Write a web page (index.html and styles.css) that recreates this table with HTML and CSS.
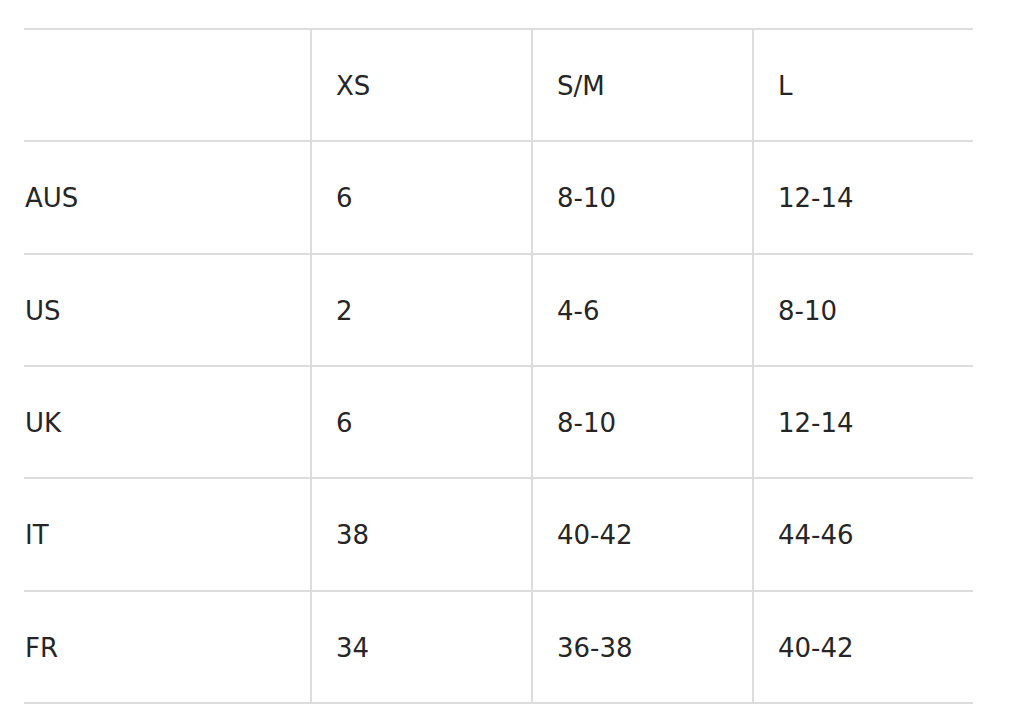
FILE: index.html
```html
<!DOCTYPE html>
<html lang="en">
<head>
<meta charset="utf-8">
<title>Size chart</title>
<link rel="stylesheet" href="styles.css">
</head>
<body>
<div class="page">
  <div class="size-table">
    <div class="cell head"></div>
    <div class="cell head col">XS</div>
    <div class="cell head col">S/M</div>
    <div class="cell head col">L</div>

    <div class="cell">AUS</div>
    <div class="cell col">6</div>
    <div class="cell col">8-10</div>
    <div class="cell col">12-14</div>

    <div class="cell">US</div>
    <div class="cell col">2</div>
    <div class="cell col">4-6</div>
    <div class="cell col">8-10</div>

    <div class="cell">UK</div>
    <div class="cell col">6</div>
    <div class="cell col">8-10</div>
    <div class="cell col">12-14</div>

    <div class="cell">IT</div>
    <div class="cell col">38</div>
    <div class="cell col">40-42</div>
    <div class="cell col">44-46</div>

    <div class="cell">FR</div>
    <div class="cell col">34</div>
    <div class="cell col">36-38</div>
    <div class="cell col">40-42</div>
  </div>
</div>
</body>
</html>
```

FILE: styles.css
```css
html, body {
  margin: 0;
  padding: 0;
  background: #ffffff;
}

.page {
  padding: 28px 45px 0 24px;
}

.size-table {
  display: grid;
  grid-template-columns: 286px 221px 221px 221px;
  grid-auto-rows: 112.33px;
  width: 949px;
  border-top: 2px solid #dddddd;
  font-family: "DejaVu Sans", sans-serif;
  font-size: 26px;
  color: #262626;
}

.cell {
  display: flex;
  align-items: center;
  border-bottom: 2px solid #dddddd;
  box-sizing: border-box;
  padding-left: 1px;
  padding-top: 2px;
}

.cell.col {
  border-left: 2px solid #dddddd;
  padding-left: 24px;
}
```
